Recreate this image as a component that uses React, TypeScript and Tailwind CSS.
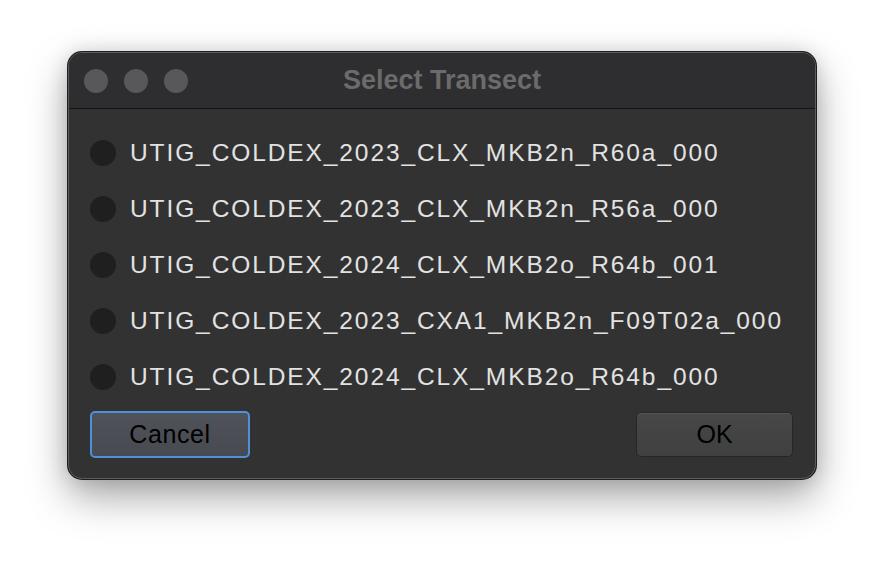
import React from "react";

const transects: string[] = [
  "UTIG_COLDEX_2023_CLX_MKB2n_R60a_000",
  "UTIG_COLDEX_2023_CLX_MKB2n_R56a_000",
  "UTIG_COLDEX_2024_CLX_MKB2o_R64b_001",
  "UTIG_COLDEX_2023_CXA1_MKB2n_F09T02a_000",
  "UTIG_COLDEX_2024_CLX_MKB2o_R64b_000",
];

const App = (): JSX.Element => {
  return (
    <div
      className="w-[884px] h-[564px] bg-white pl-[68px] pt-[52px]"
      style={{ fontFamily: '"Liberation Sans", Arial, sans-serif' }}
    >
      <div className="w-[748px] h-[427px] rounded-[14px] bg-[#323232] border border-[#5c5c5c] shadow-[0_0_0_1px_#1e1e1e,0_18px_40px_rgba(0,0,0,0.35),0_0_20px_rgba(0,0,0,0.15)] overflow-hidden flex flex-col">
        {/* title bar */}
        <div className="relative h-[56px] bg-[#2e2e30] border-b border-[#141414] flex items-center">
          <div className="flex gap-[16px] pl-[15px]">
            <span className="w-[24px] h-[24px] rounded-full bg-[#58585a]" />
            <span className="w-[24px] h-[24px] rounded-full bg-[#58585a]" />
            <span className="w-[24px] h-[24px] rounded-full bg-[#58585a]" />
          </div>
          <div className="absolute inset-0 pb-[1px] flex items-center justify-center text-[27px] font-bold text-[#6b6b6b] pointer-events-none">
            Select Transect
          </div>
        </div>

        {/* options */}
        <div className="flex flex-col pt-[16px] px-[21px]">
          {transects.map((name) => (
            <label key={name} className="h-[56px] flex items-center gap-[14px]">
              <span className="w-[26px] h-[26px] rounded-full bg-[#1f1f1f]" />
              <span className="text-[24.5px] text-[#e2e2e2] tracking-[1.9px]">{name}</span>
            </label>
          ))}
        </div>

        {/* buttons */}
        <div className="flex justify-between pl-[21px] pr-[22px] pt-[6px]">
          <button className="w-[160px] h-[47px] rounded-[5px] border-2 border-[#4d91dc] bg-gradient-to-b from-[#4f5258] to-[#474a50] text-black text-[25px] tracking-[0.6px]">
            Cancel
          </button>
          <button className="w-[157px] h-[45px] mt-[1px] rounded-[5px] border border-[#262626] bg-gradient-to-b from-[#474747] to-[#404040] shadow-[inset_0_1px_0_#555] text-black text-[25px]">
            OK
          </button>
        </div>
      </div>
    </div>
  );
};

export default App;
